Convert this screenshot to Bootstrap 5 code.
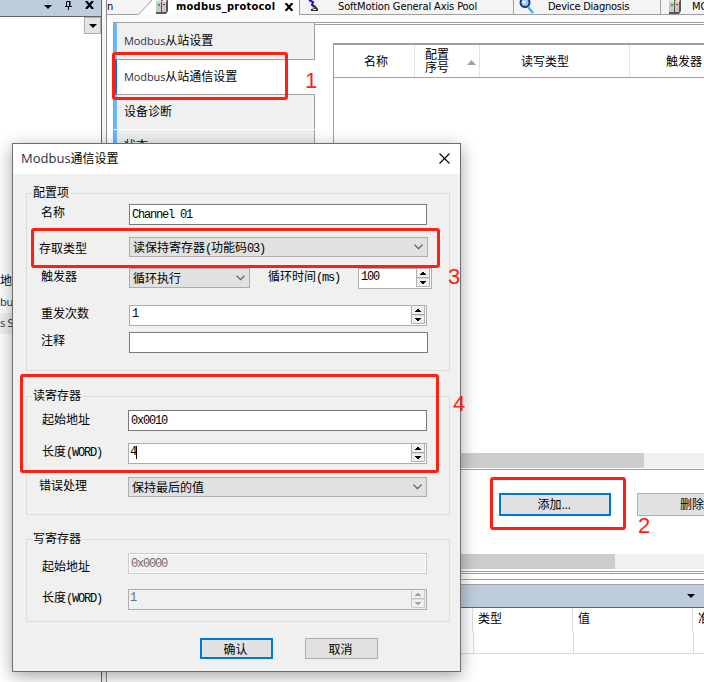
<!DOCTYPE html>
<html lang="zh-CN">
<head>
<meta charset="utf-8">
<meta name="viewport" content="width=device-width, initial-scale=1">
<title>Modbus通信设置</title>
<link rel="stylesheet" href="https://cdn.jsdelivr.net/npm/bootstrap@5.3.0/dist/css/bootstrap.min.css">
<style>
body{font:12px/16px "DejaVu Sans Condensed","Noto Sans CJK SC",sans-serif;color:#000;background:#fff}
.zh{font-family:"Noto Sans CJK SC",sans-serif}
.desk{width:704px;height:682px}
svg{display:block;flex:none}
/* left dock */
.dock{width:102px;border-right:1px solid #646464}
.dock-head{height:17px;background:#becddb;border-bottom:1px solid #646464;padding:1px 7px 0 0;gap:13px}
.dock-drop{width:17px;height:17px;background:#e4e4e4;border:1px solid #adadad}
.dock-items{margin-top:237px}
.dock-items div{height:21px;line-height:20px;white-space:nowrap}
.dock-items .lat{font:11px/20px "Open Sans",sans-serif;letter-spacing:-.3px;color:#28285a}
.dock-items .picked{background:#f0f0f0}
.gutter{width:5px;background:#f5f5f5;border-right:1px solid #8c8c8c}
/* document tabs */
.doc-tabs{height:15px;background:#f4f4f4;border-bottom:1px solid #a0a0a0;font:11px/13px "DejaVu Sans Condensed",sans-serif}
.doc-tab{height:15px;white-space:nowrap;border-left:1px solid #a0a0a0;flex-shrink:0}
.doc-tab>span{letter-spacing:-.12px}
.doc-tab.on{background:#fff;border:0;font-weight:700;margin-bottom:-1px}
.doc-gap{height:7px;background:#fafafa}
.editor{height:549px;border-top:1px solid #a0a0a0;margin-left:6px}
.side{width:202px;background:#fff;border-left:1px solid #a0a0a0}
.side-tab{height:35px;background:#f0f0f0;border-left:3px solid #69b9fd;border-right:1px solid #a0a0a0;padding-left:7px;line-height:35px}
.side-tab.on{background:#fff;border-left-color:#0078d7;border-right:0;border-top:1px solid #a0a0a0;border-bottom:1px solid #a0a0a0;height:36px;line-height:33px}
.side-tab .lat,.ttl .lat{font-family:"Open Sans",sans-serif;color:#28304a}
.side-tab .lat{font-size:11px;letter-spacing:-.1px}
.page{border-top:1px solid #a0a0a0;margin-top:1px}
.grid-box{height:427px;margin:18px 0 0 18px;border:1px solid #a0a0a0;border-top-width:2px;border-right:0}
.grid-head{height:33px;border-bottom:1px solid #a0a0a0}
.grid-head>div{border-right:1px solid #e2e2e2;line-height:13px;padding-top:2px}
.bar{height:15px;background:#f0f0f0}
.bar>div{height:15px;background:#cdcdcd}
.push{height:23px;background:#e1e1e1;border:1px solid #adadad;border-radius:0;line-height:20px;font-size:12px;padding:0 2px 0 0;color:#000}
.push.main{border:2px solid #0078d7;line-height:18px}
/* monitor pane */
.mon-head{height:24px;background:#becddb;border-top:1px solid #a0a0a0;border-bottom:1px solid #646464}
.mon-row>div{border-right:1px solid #dcdcdc;padding-left:5px;flex-shrink:0;white-space:nowrap}
/* dialog */
.dlg{position:absolute;left:12px;top:143px;width:449px;height:529px;background:#f0f0f0;border:1px solid #6e6e6e;box-shadow:0 4px 16px rgba(0,0,0,.36)}
.ttl{height:30px;background:#fff;padding:0 10px 2px 8px}
.grp{border:1px solid #dcdcdc;margin:0 10px 0 13px}
.grp-cap{height:14px;line-height:11px;margin:-8px 0 0 5px;padding:0 1px;background:#f0f0f0;width:max-content}
.frow{padding-left:12px}
.frow>label{width:90px;line-height:16px;height:17px;white-space:nowrap}
.fld{height:21px;width:299px;background:#fff;border:1px solid #7a7a7a;border-radius:0;padding:0 2px;line-height:15px}
.cmb{height:20px;width:299px;background:#e1e1e1;border:1px solid #adadad;padding:0 4px 0 3px;line-height:18px}
.spn{border-color:#abadb3;padding-right:1px}
.spn-b{width:14px}
.mono{font:12px/16px "Liberation Mono",monospace;letter-spacing:-1.2px}
.off{background:#f0f0f0;color:#6d6d6d}
.off .spn-b{opacity:.6}
.off.plain{border-color:#ccc;box-shadow:inset 0 0 0 1px #fff}
/* red callouts over the windows */
.hl{position:absolute;border:3px solid #ff2012;border-radius:3px}
.num{position:absolute;color:#ff2012;font:22px/22px "Liberation Sans",sans-serif}
</style>
<script src="https://cdn.jsdelivr.net/npm/bootstrap@5.3.0/dist/js/bootstrap.bundle.min.js"></script>
</head>
<body>
<svg width="0" height="0" class="position-absolute">
  <symbol id="tri" viewBox="0 0 8 4"><path d="M0 0h8L4 4z"/></symbol>
  <symbol id="chev" viewBox="0 0 9 6"><path d="M.5 .7l4 4 4-4" fill="none" stroke="#555" stroke-width="1.2"/></symbol>
  <symbol id="srv" viewBox="0 0 13 14"><path d="M1 2l2-2h10v11l-2 3H1z" fill="#555"/><path d="M1 2h5v10H1zM7 2h4v10H7z" fill="#c8c8c8"/><path d="M2 0h4v2H1zM8 0h4l-1 2H6z" fill="#e4e4e4"/><path d="M3 4h2v2H3z" fill="#0c0"/><path d="M8 4h2v1H8z" fill="#e00"/></symbol>
  <symbol id="spin" viewBox="0 0 14 18"><path d="M.5 0v17.5h13V0M0 9h14" fill="none" stroke="#b0b0b0"/><path d="M1 0h12v8H1zM1 10h12v7H1z" fill="#f0f0f0"/><path d="M1 8.5h12" stroke="#a8a8a8"/><path d="M4 6h6v-1H9V4H8V3H6v1H5v1H4zM4 12h6v1H9v1H8v1H6v-1H5v-1H4z" fill="currentColor"/></symbol>
</svg>
<div class="desk position-relative overflow-hidden d-flex">
  <aside class="dock d-flex flex-column flex-shrink-0 overflow-hidden">
    <div class="dock-head d-flex justify-content-end align-items-start">
      <svg width="8" height="4" class="mt-1"><use href="#tri" width="8" height="4"/></svg>
      <svg width="7" height="9" viewBox="0 0 7 9"><path d="M1.5 5.5V.5h3v5M5 0v5.5M0 5.5h7M3.5 6v3" fill="none" stroke="#000"/></svg>
      <svg width="9" height="8" viewBox="0 0 9 8"><path d="M1 0l7 8M8 0L1 8" stroke="#000" stroke-width="2.2"/></svg>
    </div>
    <div class="dock-drop align-self-end d-flex align-items-center justify-content-center"><svg width="8" height="4"><use href="#tri" width="8" height="4"/></svg></div>
    <div class="dock-items"><div>地...</div><div class="lat">bus</div><div class="picked lat">s Sl</div></div>
  </aside>
  <div class="gutter flex-shrink-0"></div>
  <main class="flex-grow-1 overflow-hidden d-flex flex-column">
    <nav class="doc-tabs d-flex flex-shrink-0">
      <div class="doc-tab border-0 d-flex" style="width:46px"><span class="flex-grow-1">n</span><svg width="16" height="15" viewBox="0 0 16 15"><path d="M0 14.5L3 13 16 0V15H0z" fill="#fff"/><path d="M0 14.5Q2 14 3 13L15 0" fill="none" stroke="#a0a0a0"/></svg></div>
      <div class="doc-tab on d-flex" style="width:146px;padding-left:2px"><svg width="13" height="14"><use href="#srv" width="13" height="14"/></svg><span style="margin-left:8px;width:109px;letter-spacing:.25px">modbus_protocol</span><svg width="8" height="8" viewBox="0 0 8 8" style="margin-top:3px"><path d="M.5 0l7 8M7.5 0l-7 8" stroke="#000" stroke-width="2.2"/></svg></div>
      <div class="doc-tab d-flex" style="width:214px;padding-left:8px"><svg width="11" height="12" viewBox="0 0 11 12"><path d="M1 0l4 2-1 3 2 1" fill="none" stroke="#1010e0" stroke-width="2"/><path d="M4 7l3-2 3 4v2H3V9l4-1z" fill="#333"/><path d="M5 9.5h3" stroke="#ddd"/></svg><span style="margin-left:19px">SoftMotion General Axis Pool</span></div>
      <div class="doc-tab d-flex" style="width:147px;padding-left:5px"><svg width="15" height="14" viewBox="0 0 15 14"><circle cx="6" cy="2.5" r="4.5" fill="#9ecbf5" stroke="#183c8c" stroke-width="2"/><circle cx="5" cy="2" r="1.6" fill="#fff"/><path d="M9 7l5 6" stroke="#3ab4ec" stroke-width="2.4"/></svg><span style="margin-left:14px;letter-spacing:-.25px">Device Diagnosis</span></div>
      <div class="doc-tab d-flex" style="padding-left:7px;width:147px"><svg width="13" height="14"><use href="#srv" width="13" height="14"/></svg><span style="margin-left:11px">MODBUS</span></div>
    </nav>
    <div class="doc-gap flex-shrink-0"></div>
    <section class="editor d-flex flex-shrink-0">
      <div class="side flex-shrink-0 overflow-hidden">
        <div class="side-tab" style="height:36px"><span class="lat">Modbus</span>从站设置</div>
        <div class="side-tab on"><span class="lat">Modbus</span>从站通信设置</div>
        <div class="side-tab" style="height:34px;line-height:34px">设备诊断</div>
        <div style="height:1px;background:#fff;width:174px"></div>
        <div class="side-tab" style="height:441px;line-height:32px">状态</div>
      </div>
      <div class="page flex-grow-1 overflow-hidden d-flex flex-column">
        <div class="grid-box d-flex flex-column flex-shrink-0">
          <div class="grid-head d-flex text-center align-items-stretch overflow-hidden">
            <div class="d-flex align-items-center flex-shrink-0" style="width:81px;padding-left:30px">名称</div>
            <div class="d-flex align-items-center flex-shrink-0" style="width:65px;padding-left:10px"><span>配置<br>序号</span><svg width="9" height="5" viewBox="0 0 9 5" style="margin-left:18px"><path d="M0 5h9L4.5 0z" fill="#a0a0a0"/></svg></div>
            <div class="d-flex align-items-center flex-shrink-0" style="width:150px;padding-left:41px">读写类型</div>
            <div class="d-flex align-items-center flex-shrink-0" style="width:150px;padding-left:36px">触发器</div>
          </div>
          <div class="bar mt-auto" style="margin-bottom:1px"><div style="width:310px"></div></div>
        </div>
        <div class="d-flex overflow-hidden flex-shrink-0" style="margin:23px 0 0 184px;gap:26px">
          <button class="btn push main flex-shrink-0" style="width:112px">添加<span style="letter-spacing:-.4px">...</span></button>
          <button class="btn push flex-shrink-0" style="width:112px">删除</button>
        </div>
        <div class="bar flex-shrink-0" style="margin-top:38px"><div style="width:300px"></div></div>
      </div>
    </section>
    <div class="flex-shrink-0 border-top border-bottom" style="height:3px;border-color:#a0a0a0!important"></div>
    <div class="flex-shrink-0" style="height:6px;border-bottom:1px solid #a0a0a0"></div>
    <div class="flex-shrink-0" style="height:4px"></div>
    <div class="mon-head d-flex align-items-center justify-content-end flex-shrink-0" style="padding-right:9px"><svg width="8" height="4"><use href="#tri" width="8" height="4"/></svg></div>
    <div class="mon-row d-flex flex-shrink-0" style="height:24px;line-height:23px"><div style="width:366px"></div><div style="width:100px">类型</div><div style="width:120px">值</div><div class="border-0">准备值</div></div>
    <div class="mon-row d-flex flex-shrink-0" style="height:22px;border-bottom:1px solid #dcdcdc"><div style="width:367px"></div><div style="width:100px"></div><div style="width:120px"></div></div>
  </main>

  <div class="dlg zh" role="dialog">
    <div class="ttl d-flex align-items-center justify-content-between"><span><span class="lat" style="font-size:13px">Modbus</span>通信设置</span><svg width="11" height="11" viewBox="0 0 11 11"><path d="M.5 .5l10 10M10.5 .5l-10 10" stroke="#000" stroke-width="1.1"/></svg></div>
    <div class="grp" style="height:178px;margin-top:19px">
      <div class="grp-cap">配置项</div>
      <div class="frow d-flex" style="margin-top:4px;padding-left:14px"><label style="width:88px">名称</label><div class="fld" style="width:298px"><span class="mono">Channel 01</span></div></div>
      <div class="frow d-flex" style="margin-top:12px"><label style="padding-top:3px">存取类型</label><div class="cmb d-flex align-items-center"><span class="flex-grow-1">读保持寄存器<span class="mono">(</span>功能码<span class="mono">03)</span></span><svg width="9" height="6"><use href="#chev" width="9" height="6"/></svg></div></div>
      <div class="frow d-flex" style="margin-top:11px;padding-left:14px"><label style="width:88px">触发器</label><div class="cmb d-flex align-items-center" style="width:121px"><span class="flex-grow-1">循环执行</span><svg width="9" height="6"><use href="#chev" width="9" height="6"/></svg></div><label style="margin-left:18px;width:90px">循环时间<span class="mono">(ms)</span></label><div class="fld spn d-flex justify-content-between" style="width:74px"><span class="mono">100</span><svg class="spn-b" height="18"><use href="#spin" width="14" height="18"/></svg></div></div>
      <div class="frow d-flex" style="margin-top:16px;padding-left:14px"><label style="width:88px">重发次数</label><div class="fld spn d-flex justify-content-between" style="width:298px"><span class="mono">1</span><svg class="spn-b" height="18"><use href="#spin" width="14" height="18"/></svg></div></div>
      <div class="frow d-flex" style="margin-top:6px;padding-left:14px"><label style="width:88px">注释</label><div class="fld"></div></div>
    </div>
    <div class="grp" style="height:119px;margin-top:25px">
      <div class="grp-cap">读寄存器</div>
      <div class="frow d-flex" style="margin-top:7px;padding-left:15px"><label style="width:86px;padding-top:1px">起始地址</label><div class="fld"><span class="mono">0x0010</span></div></div>
      <div class="frow d-flex" style="margin-top:12px;padding-left:15px"><label style="width:86px">长度<span class="mono">(WORD)</span></label><div class="fld spn d-flex justify-content-between" style="padding-left:1px"><span class="mono" style="border-right:1px solid #000;height:13px;line-height:12px;margin-top:2px">4</span><svg class="spn-b" height="18"><use href="#spin" width="14" height="18"/></svg></div></div>
      <div class="frow d-flex" style="margin-top:13px"><label style="width:89px">错误处理</label><div class="cmb d-flex align-items-center"><span class="flex-grow-1">保持最后的值</span><svg width="9" height="6"><use href="#chev" width="9" height="6"/></svg></div></div>
    </div>
    <div class="grp" style="height:83px;margin-top:24px">
      <div class="grp-cap">写寄存器</div>
      <div class="frow d-flex" style="margin-top:7px;padding-left:15px"><label style="width:86px;padding-top:5px">起始地址</label><div class="fld off plain"><span class="mono">0x0000</span></div></div>
      <div class="frow d-flex" style="margin-top:15px;padding-left:15px"><label style="width:86px">长度<span class="mono">(WORD)</span></label><div class="fld spn off d-flex justify-content-between" style="padding-left:1px"><span class="mono">1</span><svg class="spn-b" height="18"><use href="#spin" width="14" height="18"/></svg></div></div>
    </div>
    <div class="d-flex" style="margin:16px 0 0 187px;gap:32px">
      <button class="btn push main" style="width:73px;height:21px;line-height:14px">确认</button>
      <button class="btn push" style="width:73px;height:21px;line-height:16px">取消</button>
    </div>
  </div>

  <div class="hl" style="left:112px;top:52px;width:176px;height:48px"></div><div class="num" style="left:305px;top:70px">1</div>
  <div class="hl" style="left:490px;top:477px;width:136px;height:53px"></div><div class="num" style="left:638px;top:515px">2</div>
  <div class="hl" style="left:31px;top:228px;width:409px;height:40px"></div><div class="num" style="left:448px;top:266px">3</div>
  <div class="hl" style="left:20px;top:374px;width:419px;height:99px"></div><div class="num" style="left:453px;top:393px">4</div>
</div>
</body>
</html>
